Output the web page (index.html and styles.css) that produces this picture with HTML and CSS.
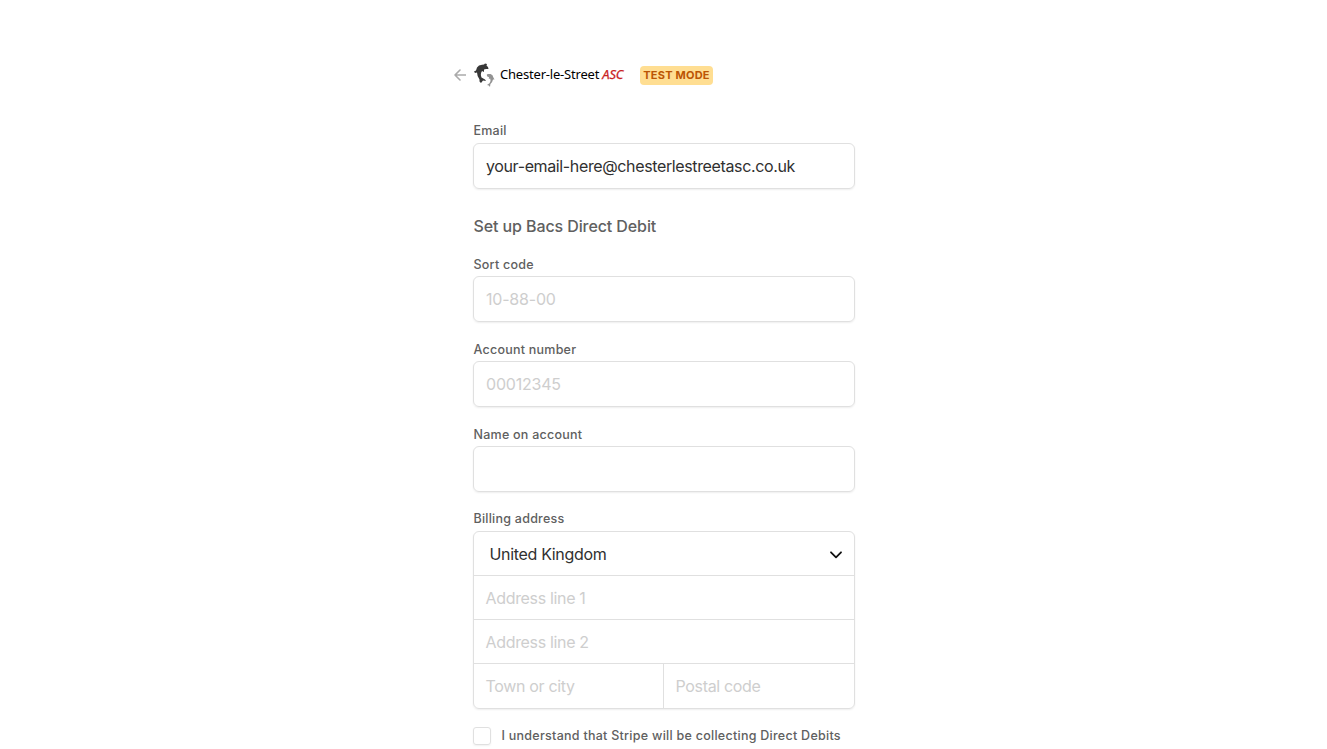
FILE: index.html
```html
<!DOCTYPE html>
<html lang="en">
<head>
<meta charset="utf-8">
<title>Set up Bacs Direct Debit</title>
<link rel="stylesheet" href="styles.css">
</head>
<body>
<main class="checkout">
  <header class="header">
    <svg class="back" viewBox="0 0 12 12" aria-label="Back"><path d="M11.5 6H1M6 1 1 6l5 5"/></svg>
    <svg class="logo" viewBox="0 0 21 24" aria-hidden="true">
      <path fill="#383838" d="M0 8.5 2 7.5 3 4.5 5 2.5 8 1.8 10 1.6 11 .5 13 1 12.5 2.5 14 4 14.5 6 12 6 10 6.5 10 9 8 8Q6 11 7.5 14.5L11 16.5 12 18 9 17.5 7 20 5.5 18.5 5.5 16.5Q3 13 3 9.5L1 10Z"/>
      <path fill="#929292" d="M12.8 11.5 14 11 15.5 11 16.5 11Q19 12 19.4 14.4L20.5 16.5 19 16.6Q18.5 19.5 16.4 21L16 24 14.8 22.5 13 22 15.5 20.3Q17.2 17.5 16.2 15.5L14.8 16 15 14.3 13 13.2Z"/>
    </svg>
    <span class="brand">Chester-le-Street <em class="club">ASC</em></span>
    <span class="badge">TEST MODE</span>
  </header>
  <form class="form">
    <label class="label first">Email</label>
    <div class="box email">your-email-here@chesterlestreetasc.co.uk</div>
    <h1 class="title">Set up Bacs Direct Debit</h1>
    <label class="label">Sort code</label>
    <div class="box hint digits">10-88-00</div>
    <label class="label">Account number</label>
    <div class="box hint digits">00012345</div>
    <label class="label">Name on account</label>
    <div class="box name"></div>
    <label class="label billing">Billing address</label>
    <div class="address">
      <div class="row country"><span>United Kingdom</span><svg class="chevron" viewBox="0 0 12 8"><path d="M1 1.3 6 6.3l5-5"/></svg></div>
      <div class="row hint">Address line 1</div>
      <div class="row hint">Address line 2</div>
      <div class="split">
        <div class="row hint town">Town or city</div>
        <div class="row hint postal">Postal code</div>
      </div>
    </div>
    <div class="consent"><span class="check"></span><span class="consent-text">I understand that Stripe will be collecting Direct Debits</span></div>
  </form>
</main>
</body>
</html>
```
FILE: styles.css
```css
* { box-sizing: border-box; }
body { margin: 0; background: #fff; font-family: Inter, sans-serif; height: 749px; overflow: hidden; }
.checkout { width: 382px; margin: 0 0 0 473px; padding-top: 62px; }
.header { display: flex; align-items: center; height: 26px; margin-left: -19px; }
.back { width: 12px; height: 12px; fill: none; stroke: #aaa; stroke-width: 1.6; stroke-linecap: round; stroke-linejoin: round; }
.logo { width: 21px; height: 24px; margin-left: 8px; }
.brand { width: 140px; padding: 0 0 2px 5px; font: 13px "Noto Sans", sans-serif; letter-spacing: -.2px; color: #000; white-space: nowrap; }
.club { color: #c9211e; -webkit-text-stroke: .25px #c9211e; }
.badge { width: 73px; height: 19px; margin-left: 5px; border-radius: 4px; background: #ffde92; color: #bb5504; font-size: 11px; letter-spacing: .2px; font-weight: 700; line-height: 19px; text-align: center; white-space: nowrap; }
.form { padding-top: 34px; }
.label { display: block; height: 20px; padding-left: .5px; font-size: 12.5px; letter-spacing: .24px; font-weight: 500; line-height: 17px; color: #606060; white-space: nowrap; }
.first, .billing { height: 21px; }
.box { height: 46px; margin-bottom: 19px; padding-left: 12px; border: 1px solid #e0e0e0; border-radius: 6px; box-shadow: 0 1px 2px rgba(0,0,0,.07); font-size: 16px; letter-spacing: -.37px; line-height: 45px; color: #303030; white-space: nowrap; }
.email { margin-bottom: 27px; }
.hint { color: #cecece; }
.digits { letter-spacing: -.2px; }
.name { margin-bottom: 18px; }
.title { margin: 0 0 19px; padding-left: .5px; font-size: 16px; letter-spacing: -.1px; font-weight: 500; line-height: 21px; color: #606060; white-space: nowrap; }
.address { height: 178px; border: 1px solid #e0e0e0; border-radius: 6px; box-shadow: 0 1px 2px rgba(0,0,0,.07); }
.row { height: 44px; padding-left: 11.5px; border-bottom: 1px solid #e0e0e0; font-size: 16px; letter-spacing: -.33px; line-height: 44px; white-space: nowrap; }
.country { display: flex; justify-content: space-between; align-items: center; padding: 0 12px 0 15.5px; color: #303030; }
.chevron { width: 12px; height: 8px; margin-top: 2px; fill: none; stroke: #111; stroke-width: 1.8; stroke-linecap: round; stroke-linejoin: round; }
.split { display: flex; }
.town { width: 190px; border-right: 1px solid #e0e0e0; border-bottom: 0; }
.postal { border-bottom: 0; }
.consent { display: flex; align-items: center; margin-top: 18px; height: 18px; }
.check { width: 18px; height: 18px; border: 1px solid #e0e0e0; border-radius: 3px; box-shadow: 0 1px 2px rgba(0,0,0,.06); }
.consent-text { padding: 0 0 1px 10.5px; font-size: 12.5px; letter-spacing: .27px; font-weight: 500; color: #606060; white-space: nowrap; }
```
